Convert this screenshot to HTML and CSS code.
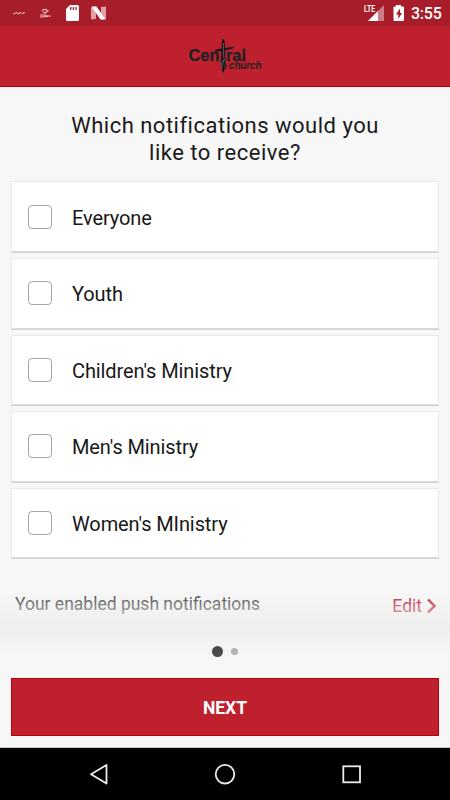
FILE: index.html
```html
<!DOCTYPE html>
<html lang="en">
<head>
<meta charset="utf-8">
<title>Central Church</title>
<link rel="stylesheet" href="styles.css">
</head>
<body>
<div class="screen">
  <div class="status">
    <svg class="status-left" width="112" height="26" viewBox="0 0 112 26">
      <path d="M13 14l4-1.5 1 1.5 3-1.5 1 1 3-1" fill="none" stroke="#f3cfd2" stroke-width="1"/>
      <path d="M42 11q1-2 4-1.500l2 1.500-3 2-2-1M40 15h5l2 1h4M40 17l8-.5" fill="none" stroke="#f0c3c7" stroke-width="1.100"/>
      <path d="M70 5h7.500q1.500 0 1.500 1.500v13q0 1.500-1.500 1.500h-10q-1.500 0-1.500-1.500V9z" fill="#fff"/>
      <path d="M70.700 7v3M73.400 7v3M76.100 7v3" stroke="#a71d29" stroke-width="1.300"/>
      <path d="M91 7.500l5-1v12.500l-5 .5zM101 7l5-.5v12.500l-5 .5z" fill="#e29fa6"/>
      <path d="M91.500 6.500h5l9 13h-5z" fill="#fff"/>
    </svg>
    <div class="status-right">
      <svg width="46" height="26" viewBox="0 0 46 26">
        <path d="M20 5v16H4z" fill="#cd7d85"/>
        <path d="M14 11V21H4z" fill="#fff"/>
        <path d="M0 4h11.500v9H0z" fill="#a71d29"/>
        <text class="lte" x="0" y="12" textLength="11" lengthAdjust="spacingAndGlyphs">LTE</text>
        <path d="M32 5h5v1.500h2q1 0 1 1V20q0 1-1 1h-8.500q-1 0-1-1V7.500q0-1 1-1H32z" fill="#fff"/>
        <path d="M36 8.500l-4 6h2.300V19l3.700-6h-2z" fill="#a71d29"/>
      </svg>
      <span class="clock">3:55</span>
    </div>
  </div>
  <header class="header">
    <svg width="76" height="38" viewBox="0 0 76 38">
      <text class="logo-main" x="1.500" y="22.500" textLength="31" lengthAdjust="spacingAndGlyphs">Cen</text>
      <text class="logo-main" x="39" y="22.500" textLength="20" lengthAdjust="spacingAndGlyphs">ral</text>
      <text class="logo-sub" x="42" y="31" textLength="32.500" lengthAdjust="spacingAndGlyphs">church</text>
      <path d="M35 1l2.500 1 .5 8 9-1.500-1 2-8 2 .8 10-1.500 10-1 2.500-1.500-3-1.200-8 1-11-7 1 1-2.500 6-1z" fill="#17191b"/>
      <path d="M36.500 5v12l1 6M33.500 27l3-5-2 9" fill="none" stroke="#81777a" stroke-width=".6"/>
      <path d="M39 25l-2 3 3-1-2 5" fill="none" stroke="#24272b" stroke-width="1"/>
    </svg>
  </header>
  <main class="content">
    <h1>Which notifications would you<br>like to receive?</h1>
    <div class="list">
      <label class="card"><span class="check"></span><span>Everyone</span></label>
      <label class="card"><span class="check"></span><span>Youth</span></label>
      <label class="card"><span class="check"></span><span>Children's Ministry</span></label>
      <label class="card"><span class="check"></span><span>Men's Ministry</span></label>
      <label class="card"><span class="check"></span><span>Women's MInistry</span></label>
    </div>
    <div class="enabled">
      <span class="enabled-text">Your enabled push notifications</span>
      <span class="edit">Edit<svg width="11" height="16" viewBox="0 0 11 16"><path d="M2 1.500L8.500 8 2 14.500" fill="none" stroke="#be001c" stroke-width="2.400"/></svg></span>
    </div>
    <div class="pager"><i class="dot active"></i><i class="dot"></i></div>
    <div class="next">NEXT</div>
  </main>
  <nav class="nav">
    <svg width="450" height="52" viewBox="0 0 450 52" fill="none" stroke="#ececec" stroke-width="1.800">
      <path d="M106.500 17v18.500L91 26.200z" stroke-linejoin="round"/>
      <circle cx="225" cy="26.200" r="9.300"/>
      <rect x="343.300" y="18.300" width="16.700" height="16"/>
    </svg>
  </nav>
</div>
</body>
</html>
```

FILE: styles.css
```css
* { box-sizing: border-box; }
body { margin: 0; font-family: Roboto, "Liberation Sans", sans-serif; }
.screen { width: 450px; height: 800px; display: flex; flex-direction: column; background: #f7f7f7; overflow: hidden; }
.status { height: 26px; flex: none; background: #a71d29; display: flex; justify-content: space-between; color: #fff; }
.status-right { display: flex; padding-right: 8px; }
.status-right svg { margin-right: 1px; }
.clock { font-size: 16px; font-weight: 500; letter-spacing: -.25px; line-height: 28px; width: 31px; white-space: nowrap; }
.lte { font: 700 8.500px Roboto, sans-serif; fill: #fff; }
.header { height: 61px; flex: none; background: #be202e; border-bottom: 1px solid #b90008; display: flex; justify-content: center; padding-top: 12px; }
.header svg { overflow: visible; }
.logo-main { font: 700 16.500px "Liberation Sans", sans-serif; fill: #202124; stroke: #202124; stroke-width: .3px; }
.logo-sub { font: italic 700 11px "Liberation Sans", sans-serif; fill: #202124; }
.content { height: 661px; flex: none; padding: 25px 11px 0; display: flex; flex-direction: column; border-bottom: 1px solid #c9c9c9; }
h1 { margin: 0; height: 69.400px; flex: none; font-size: 22px; font-weight: 400; letter-spacing: .5px; line-height: 27px; text-align: center; color: #1a1a1a; }
.list { display: flex; flex-direction: column; gap: 6px; }
.card { height: 70.600px; background: #fff; border: 1px solid #e9e9e9; border-bottom-color: #dcdcdc; box-shadow: 0 1px 0 #d2d2d2; display: flex; align-items: center; gap: 20px; padding: 2px 0 0 16px; font-size: 20px; letter-spacing: -.1px; color: #181818; border-radius: 1px; }
.check { width: 24px; height: 24px; border: 1px solid #a5a5a5; border-radius: 4px; margin-top: -2px; }
.enabled { position: relative; height: 70px; margin: 30px -11px 0; padding: 0 13px 0 15px; display: flex; justify-content: space-between; align-items: flex-start; font-size: 17.500px; }
.enabled::after { content: ""; position: absolute; inset: 0; background: linear-gradient(rgba(247,247,247,0), rgba(238,238,238,.95) 40px, #eee 42px, #f7f7f7); }
.enabled-text { color: #333; line-height: 20px; margin-top: 6px; }
.edit { color: #be001c; line-height: 20px; margin-top: 8px; display: flex; align-items: center; gap: 4px; }
.pager { position: relative; z-index: 1; height: 12px; margin: -13px 0 21px; display: flex; justify-content: center; align-items: center; gap: 8.500px; }
.dot { width: 7px; height: 7px; border-radius: 50%; background: #b3b3b3; }
.dot.active { width: 11px; height: 11px; background: #4a4a4a; }
.next { height: 58px; background: #be202e; border: 1px solid #bd0008; display: flex; align-items: center; justify-content: center; padding-top: 1px; color: #fff; font-size: 17.500px; font-weight: 700; }
.nav { height: 52px; flex: none; background: #000; }
```
